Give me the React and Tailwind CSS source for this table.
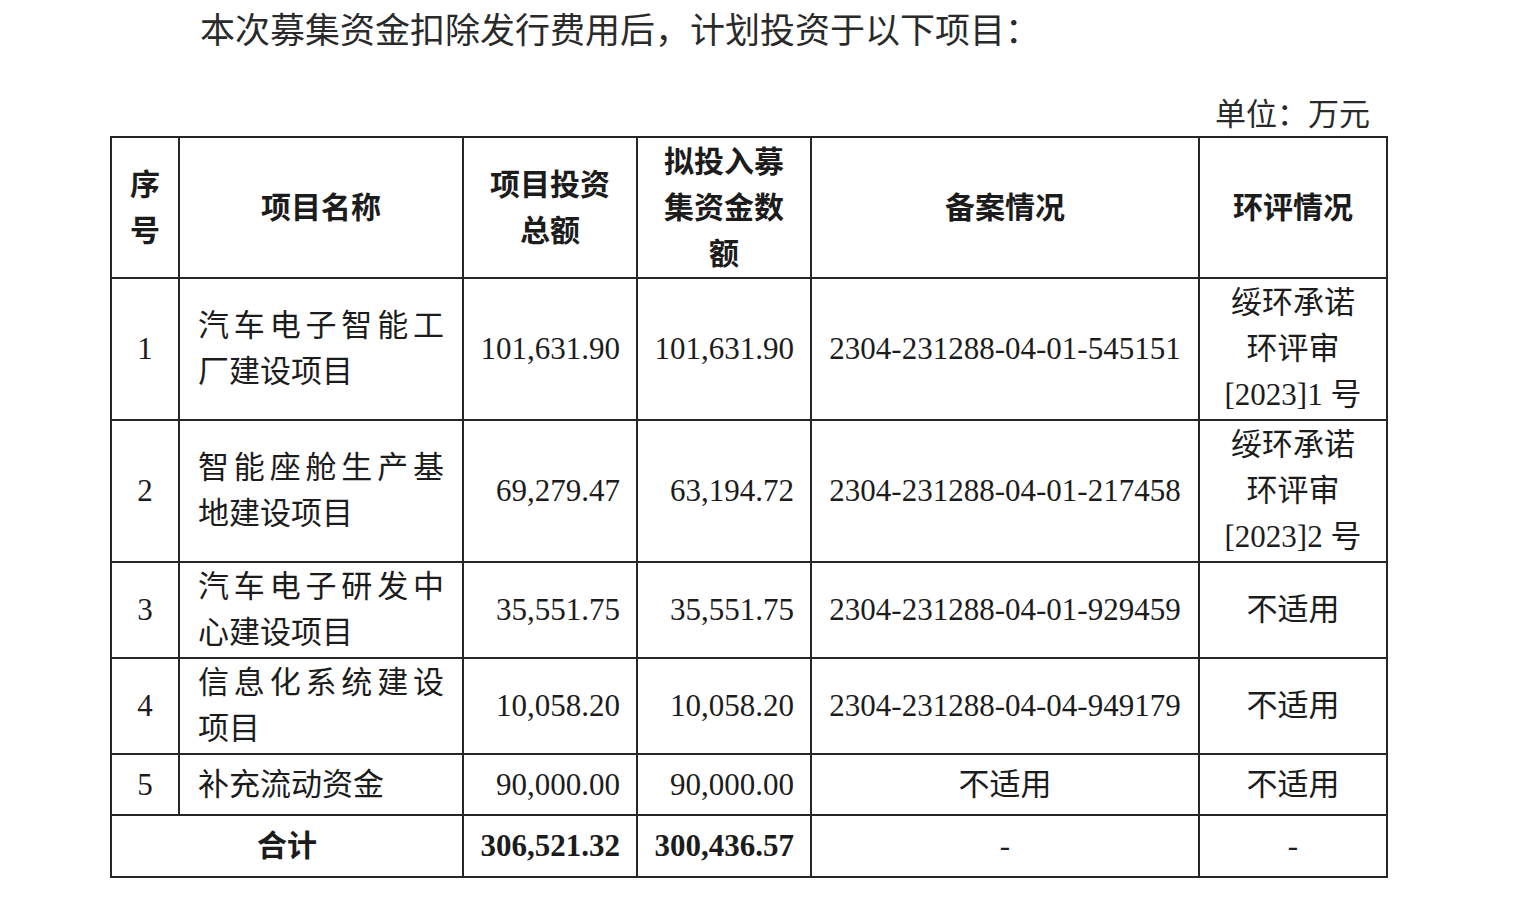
const font = { fontFamily: '"Liberation Serif", "Noto Sans CJK SC", serif' };

const rows = [
  {
    no: "1",
    name: ["汽车电子智能工", "厂建设项目"],
    total: "101,631.90",
    raise: "101,631.90",
    filing: "2304-231288-04-01-545151",
    env: ["绥环承诺", "环评审", "[2023]1 号"],
    h: "h-[142px]",
  },
  {
    no: "2",
    name: ["智能座舱生产基", "地建设项目"],
    total: "69,279.47",
    raise: "63,194.72",
    filing: "2304-231288-04-01-217458",
    env: ["绥环承诺", "环评审", "[2023]2 号"],
    h: "h-[142px]",
  },
  {
    no: "3",
    name: ["汽车电子研发中", "心建设项目"],
    total: "35,551.75",
    raise: "35,551.75",
    filing: "2304-231288-04-01-929459",
    env: ["不适用"],
    h: "h-[96px]",
  },
  {
    no: "4",
    name: ["信息化系统建设", "项目"],
    total: "10,058.20",
    raise: "10,058.20",
    filing: "2304-231288-04-04-949179",
    env: ["不适用"],
    h: "h-[96px]",
  },
  {
    no: "5",
    name: ["补充流动资金"],
    total: "90,000.00",
    raise: "90,000.00",
    filing: "不适用",
    env: ["不适用"],
    h: "h-[61px]",
  },
];

const cell = "border-2 border-[#262626] align-middle p-0";

function Lines({ lines, className = "" }) {
  return (
    <div className={className}>
      {lines.map((l, i) => (
        <div key={i}>{l}</div>
      ))}
    </div>
  );
}

function NameLines({ lines }) {
  return (
    <div className="px-[18px]">
      {lines.map((l, i) =>
        lines.length > 1 && i === 0 ? (
          <div key={i} className="text-justify [text-align-last:justify]">
            {l}
          </div>
        ) : (
          <div key={i}>{l}</div>
        )
      )}
    </div>
  );
}

export default function App() {
  return (
    <div className="min-h-screen w-[1518px] bg-white text-[#1c1c1c]" style={font}>
      {/* intro line */}
      <div className="pl-[200px] pt-[11px] text-[35px] leading-[42px] text-[#2a2a2a]">
        本次募集资金扣除发行费用后，计划投资于以下项目：
      </div>

      <div className="mt-[42px] w-[1370px] text-right text-[31px] leading-[40px] text-[#2a2a2a]">
        单位：万元
      </div>

      <table className="ml-[110px] mt-[1px] w-[1276px] table-fixed border-collapse text-[31px] leading-[46px]">
        <colgroup>
          <col className="w-[68px]" />
          <col className="w-[284px]" />
          <col className="w-[174px]" />
          <col className="w-[174px]" />
          <col className="w-[388px]" />
          <col className="w-[188px]" />
        </colgroup>
        <thead>
          <tr className="h-[141px] font-bold text-[30px]">
            <th className={`${cell} text-center`}>
              <Lines lines={["序", "号"]} />
            </th>
            <th className={`${cell} text-center`}>项目名称</th>
            <th className={`${cell} text-center`}>
              <Lines lines={["项目投资", "总额"]} />
            </th>
            <th className={`${cell} text-center`}>
              <Lines lines={["拟投入募", "集资金数", "额"]} />
            </th>
            <th className={`${cell} text-center`}>备案情况</th>
            <th className={`${cell} text-center`}>环评情况</th>
          </tr>
        </thead>
        <tbody>
          {rows.map((r) => (
            <tr key={r.no} className={r.h}>
              <td className={`${cell} text-center`}>{r.no}</td>
              <td className={`${cell} text-left`}>
                <NameLines lines={r.name} />
              </td>
              <td className={`${cell} pr-[16px] text-right`}>{r.total}</td>
              <td className={`${cell} pr-[16px] text-right`}>{r.raise}</td>
              <td className={`${cell} text-center`}>{r.filing}</td>
              <td className={`${cell} text-center`}>
                <Lines lines={r.env} />
              </td>
            </tr>
          ))}
          <tr className="h-[62px]">
            <td colSpan={2} className={`${cell} text-center font-bold text-[30px]`}>
              合计
            </td>
            <td className={`${cell} pr-[16px] text-right font-bold`}>306,521.32</td>
            <td className={`${cell} pr-[16px] text-right font-bold`}>300,436.57</td>
            <td className={`${cell} text-center`}>-</td>
            <td className={`${cell} text-center`}>-</td>
          </tr>
        </tbody>
      </table>
    </div>
  );
}
